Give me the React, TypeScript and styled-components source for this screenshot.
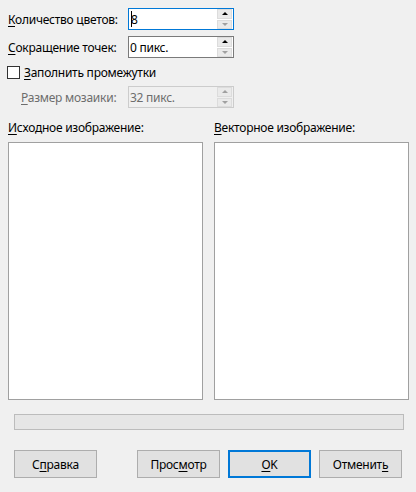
import React from "react";
import styled, { createGlobalStyle } from "styled-components";

const Global = createGlobalStyle`
  html, body { margin: 0; padding: 0; background: #f0f0f0; }
  * { box-sizing: border-box; }
`;

const Dialog = styled.div`
  width: 416px;
  height: 492px;
  background: #f0f0f0;
  padding: 8px 8px 0 8px;
  font-family: "Segoe UI", "Noto Sans", "Open Sans", sans-serif;
  font-size: 12px;
  letter-spacing: -0.25px;
  color: #000;
  display: flex;
  flex-direction: column;
`;

const FieldRow = styled.div<{ $indent?: number; $top?: number }>`
  display: flex;
  align-items: center;
  height: 22px;
  margin-top: ${(p) => p.$top ?? 0}px;
  padding-left: ${(p) => p.$indent ?? 0}px;
`;

const Label = styled.span<{ $width: number; $disabled?: boolean }>`
  width: ${(p) => p.$width}px;
  color: ${(p) => (p.$disabled ? "#6d6d6d" : "#000")};
  white-space: nowrap;
`;

const Key = styled.span`
  text-decoration: underline;
  text-underline-offset: 2px;
`;

const SpinBox = styled.div<{ $focused?: boolean; $disabled?: boolean }>`
  width: 106px;
  height: 22px;
  display: flex;
  align-items: stretch;
  background: ${(p) => (p.$disabled ? "#f0f0f0" : "#fff")};
  border: 1px solid
    ${(p) => (p.$focused ? "#0078d7" : p.$disabled ? "#cccccc" : "#7a7a7a")};
  color: ${(p) => (p.$disabled ? "#6d6d6d" : "#000")};
`;

const SpinText = styled.div`
  flex: 1;
  display: flex;
  align-items: center;
  padding-left: 1px;
  white-space: nowrap;
`;

const Caret = styled.span`
  display: inline-block;
  width: 1px;
  height: 16px;
  background: #000;
  margin-right: -1px;
  margin-left: 1px;
`;

const SpinButtons = styled.div`
  width: 15px;
  margin: 0 1px 0 0;
  display: flex;
  flex-direction: column;
  gap: 1px;
  padding: 0;
`;

const SpinBtn = styled.div`
  flex: 1;
  background: #eaeaea;
  border: 1px solid #dcdcdc;
  display: flex;
  align-items: center;
  justify-content: center;
`;

const Arrow = styled.span<{ $down?: boolean; $dim?: boolean }>`
  width: 0;
  height: 0;
  border-left: 3px solid transparent;
  border-right: 3px solid transparent;
  ${(p) =>
    p.$down
      ? `border-top: 3px solid ${p.$dim ? "#a0a0a0" : "#000"};`
      : `border-bottom: 3px solid ${p.$dim ? "#a0a0a0" : "#000"};`}
`;

const CheckRow = styled.label`
  display: flex;
  align-items: center;
  gap: 4px;
  height: 16px;
  margin-top: 6px;
  white-space: nowrap;
`;

const CheckBox = styled.span`
  width: 13px;
  height: 13px;
  border: 1px solid #333;
  background: #fff;
  margin-left: -1px;
`;

const PanelLabels = styled.div`
  display: grid;
  grid-template-columns: 195px 195px;
  column-gap: 11px;
  margin-top: 12px;
  height: 16px;
  line-height: 16px;
`;

const Panels = styled.div`
  display: grid;
  grid-template-columns: 195px 195px;
  column-gap: 11px;
  margin-top: 6px;
`;

const Panel = styled.div`
  height: 258px;
  background: #fff;
  border: 1px solid #a0a0a0;
`;

const Progress = styled.div`
  width: 390px;
  height: 16px;
  margin: 14px 0 0 6px;
  background: #e6e6e6;
  border: 1px solid #bcbcbc;
`;

const ButtonRow = styled.div`
  display: flex;
  margin: 20px 0 0 6px;
`;

const Button = styled.button<{ $default?: boolean; $gap?: number }>`
  width: 83px;
  height: 28px;
  margin-left: ${(p) => p.$gap ?? 0}px;
  background: #e1e1e1;
  border: ${(p) => (p.$default ? "2px solid #0078d7" : "1px solid #adadad")};
  font: inherit;
  letter-spacing: inherit;
  color: #000;
  padding: 0;
  display: flex;
  align-items: center;
  justify-content: center;
`;

const Spin: React.FC<{
  value: string;
  focused?: boolean;
  disabled?: boolean;
  downDim?: boolean;
}> = ({ value, focused, disabled, downDim }) => (
  <SpinBox $focused={focused} $disabled={disabled}>
    <SpinText>
      {focused && <Caret />}
      {value}
    </SpinText>
    <SpinButtons>
      <SpinBtn>
        <Arrow $dim={disabled} />
      </SpinBtn>
      <SpinBtn>
        <Arrow $down $dim={disabled || downDim} />
      </SpinBtn>
    </SpinButtons>
  </SpinBox>
);

export default function App() {
  return (
    <>
      <Global />
      <Dialog>
        <FieldRow>
          <Label $width={120}>
            <Key>К</Key>оличество цветов:
          </Label>
          <Spin value="8" focused downDim />
        </FieldRow>
        <FieldRow $top={6}>
          <Label $width={120}>
            <Key>С</Key>окращение точек:
          </Label>
          <Spin value="0 пикс." downDim />
        </FieldRow>
        <CheckRow>
          <CheckBox />
          <span>
            <Key>З</Key>аполнить промежутки
          </span>
        </CheckRow>
        <FieldRow $top={6} $indent={13}>
          <Label $width={107} $disabled>
            <Key>Р</Key>азмер мозаики:
          </Label>
          <Spin value="32 пикс." disabled />
        </FieldRow>
        <PanelLabels>
          <span>
            <Key>И</Key>сходное изображение:
          </span>
          <span>
            <Key>В</Key>екторное изображение:
          </span>
        </PanelLabels>
        <Panels>
          <Panel />
          <Panel />
        </Panels>
        <Progress />
        <ButtonRow>
          <Button>
            С<Key>п</Key>равка
          </Button>
          <Button $gap={40}>
            Прос<Key>м</Key>отр
          </Button>
          <Button $gap={8} $default>
            <Key>О</Key>K
          </Button>
          <Button $gap={8}>
            Отменит<Key>ь</Key>
          </Button>
        </ButtonRow>
      </Dialog>
    </>
  );
}
